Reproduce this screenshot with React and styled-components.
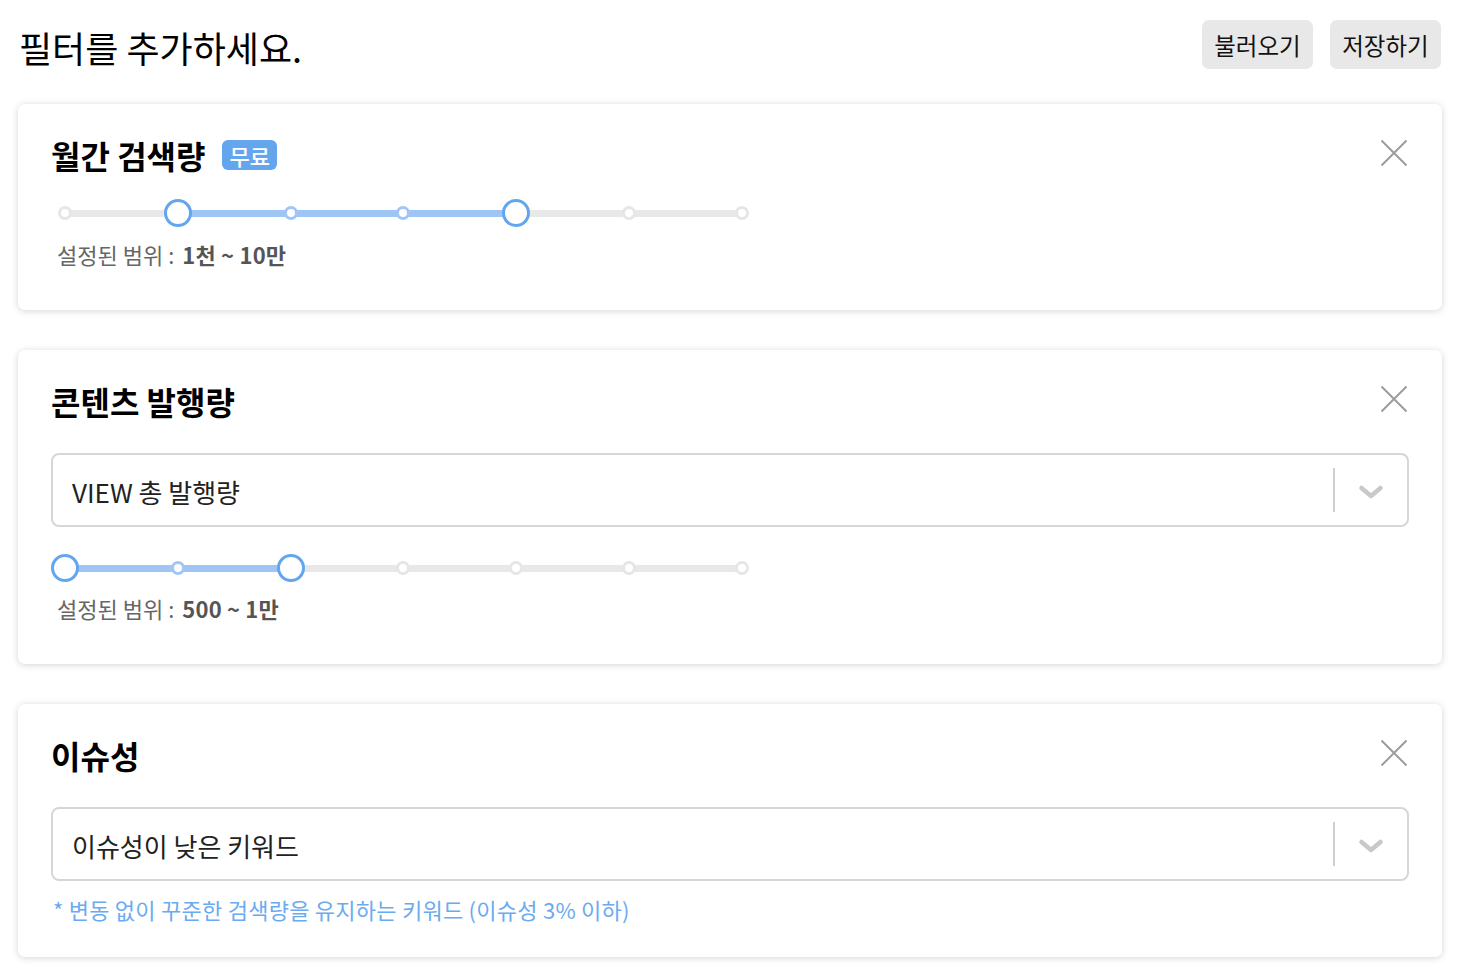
import React from "react";
import styled, { createGlobalStyle } from "styled-components";

const GlobalStyle = createGlobalStyle`
  html, body { margin: 0; padding: 0; background: #fff; }
  body { font-family: "Noto Sans CJK KR", "Noto Sans", sans-serif; color: #111; }
  * { box-sizing: border-box; }
`;

const Page = styled.div`
  width: 1424px;
  margin-left: 18px;
  padding-top: 20px;
  padding-bottom: 20px;
`;

const Header = styled.header`
  display: flex;
  align-items: center;
  justify-content: space-between;
  height: 49px;
  margin-bottom: 35px;
`;

const PageTitle = styled.h1`
  margin: 5px 0 0 1px;
  font-size: 36px;
  font-weight: 400;
  line-height: 44px;
  color: #000;
`;

const HeaderActions = styled.div`
  display: flex;
  gap: 17px;
  margin-right: 1px;
`;

const GrayButton = styled.button`
  height: 49px;
  width: 111px;
  border: none;
  border-radius: 7px;
  background: #e8e8e8;
  font-family: inherit;
  font-size: 23.5px;
  color: #111;
  padding: 0;
  cursor: pointer;
`;

const CardList = styled.div`
  display: flex;
  flex-direction: column;
  gap: 40px;
`;

const Card = styled.section`
  background: #fff;
  border-radius: 7px;
  box-shadow: 0 1px 7px rgba(0, 0, 0, 0.17);
  padding: 32px 33px ${(p) => p.$pb || 40}px 33px;
  display: flex;
  flex-direction: column;
`;

const CardHead = styled.div`
  display: flex;
  align-items: center;
  height: 38px;
  margin-bottom: ${(p) => p.$mb}px;
`;

const CardTitle = styled.h2`
  margin: 0;
  font-size: 32px;
  font-weight: 700;
  line-height: 38px;
  color: #000;
`;

const Badge = styled.span`
  margin-left: 17px;
  height: 30px;
  padding: 0 7px;
  border-radius: 6px;
  background: #64a6ee;
  color: #fff;
  font-size: 22px;
  font-weight: 500;
  line-height: 30px;
`;

const CloseButton = styled.button`
  margin-left: auto;
  margin-right: 1px;
  margin-top: -5px;
  width: 28px;
  height: 28px;
  padding: 0;
  border: none;
  background: none;
  display: flex;
  align-items: center;
  justify-content: center;
  cursor: pointer;
`;

const SliderWrap = styled.div`
  position: relative;
  width: 705px;
  height: 28px;
  display: flex;
  justify-content: space-between;
  align-items: center;
`;

const Track = styled.div`
  position: absolute;
  left: 14px;
  right: 14px;
  top: 11px;
  height: 7px;
  background: #e8e8e8;
`;

const ActiveTrack = styled.div`
  position: absolute;
  top: 0;
  bottom: 0;
  background: #9fc5f4;
`;

const Stop = styled.div`
  position: relative;
  z-index: 1;
  width: 28px;
  height: 28px;
  display: flex;
  align-items: center;
  justify-content: center;
`;

const Dot = styled.span`
  display: block;
  width: ${(p) => (p.$handle ? 28 : 14)}px;
  height: ${(p) => (p.$handle ? 28 : 14)}px;
  border-radius: 50%;
  background: #fff;
  border: ${(p) =>
    p.$handle
      ? "3px solid #63a6ee"
      : `3.5px solid ${p.$active ? "#a2c6f4" : "#e6e6e6"}`};
`;

const RangeText = styled.p`
  margin: ${(p) => p.$mt}px 0 0 6px;
  font-size: 22px;
  line-height: 28px;
  color: #666;
`;

const Colon = styled.span`
  margin: 0 8px 0 5px;
`;

const RangeValue = styled.strong`
  font-weight: 700;
  color: #555;
  letter-spacing: 0.2px;
`;

const Select = styled.div`
  height: 74px;
  border: 2px solid #d6d6d6;
  border-radius: 8px;
  display: flex;
  align-items: center;
  padding-left: 19px;
  margin-bottom: ${(p) => p.$mb}px;
`;

const SelectValue = styled.span`
  flex: 1;
  font-size: 26px;
  line-height: 34px;
  color: #222;
  margin-top: 3px;
`;

const Separator = styled.span`
  width: 2px;
  height: 44px;
  background: #cfcfcf;
`;

const ChevronBox = styled.span`
  width: 72px;
  display: flex;
  align-items: center;
  justify-content: center;
  margin-top: 4px;
`;

const Hint = styled.p`
  margin: 0 0 0 2px;
  font-size: 22px;
  line-height: 28px;
  letter-spacing: 0.25px;
  color: #6aabef;
`;

const STEPS = 7;

function RangeSlider({ lo, hi }) {
  const pct = (i) => (i / (STEPS - 1)) * 100;
  return (
    <SliderWrap>
      <Track>
        <ActiveTrack style={{ left: `${pct(lo)}%`, width: `${pct(hi) - pct(lo)}%` }} />
      </Track>
      {Array.from({ length: STEPS }).map((_, i) => (
        <Stop key={i}>
          <Dot $handle={i === lo || i === hi} $active={i > lo && i < hi} />
        </Stop>
      ))}
    </SliderWrap>
  );
}

function CloseIcon() {
  return (
    <CloseButton aria-label="닫기">
      <svg width="28" height="28" viewBox="0 0 28 28">
        <path d="M1.5 1.5 L26.5 26.5 M26.5 1.5 L1.5 26.5" stroke="#9c9c9c" strokeWidth="2" fill="none" />
      </svg>
    </CloseButton>
  );
}

function Dropdown({ value, mb }) {
  return (
    <Select $mb={mb}>
      <SelectValue>{value}</SelectValue>
      <Separator />
      <ChevronBox>
        <svg width="26" height="18" viewBox="0 0 26 18">
          <polyline points="3.5,5 13,13 22.5,5" stroke="#c9c9c9" strokeWidth="4.5" fill="none" strokeLinecap="round" strokeLinejoin="round" />
        </svg>
      </ChevronBox>
    </Select>
  );
}

function Range({ value, mt }) {
  return (
    <RangeText $mt={mt}>
      설정된 범위<Colon>:</Colon>
      <RangeValue>{value}</RangeValue>
    </RangeText>
  );
}

export default function App() {
  return (
    <>
      <GlobalStyle />
      <Page>
        <Header>
          <PageTitle>필터를 추가하세요.</PageTitle>
          <HeaderActions>
            <GrayButton>불러오기</GrayButton>
            <GrayButton>저장하기</GrayButton>
          </HeaderActions>
        </Header>
        <CardList>
          <Card $pb={42}>
            <CardHead $mb={25}>
              <CardTitle>월간 검색량</CardTitle>
              <Badge>무료</Badge>
              <CloseIcon />
            </CardHead>
            <RangeSlider lo={1} hi={4} />
            <Range mt={13} value="1천 ~ 10만" />
          </Card>
          <Card $pb={42}>
            <CardHead $mb={33}>
              <CardTitle>콘텐츠 발행량</CardTitle>
              <CloseIcon />
            </CardHead>
            <Dropdown value="VIEW 총 발행량" mb={27} />
            <RangeSlider lo={0} hi={2} />
            <Range mt={12} value="500 ~ 1만" />
          </Card>
          <Card $pb={34}>
            <CardHead $mb={33}>
              <CardTitle>이슈성</CardTitle>
              <CloseIcon />
            </CardHead>
            <Dropdown value="이슈성이 낮은 키워드" mb={14} />
            <Hint>* 변동 없이 꾸준한 검색량을 유지하는 키워드 (이슈성 3% 이하)</Hint>
          </Card>
        </CardList>
      </Page>
    </>
  );
}
